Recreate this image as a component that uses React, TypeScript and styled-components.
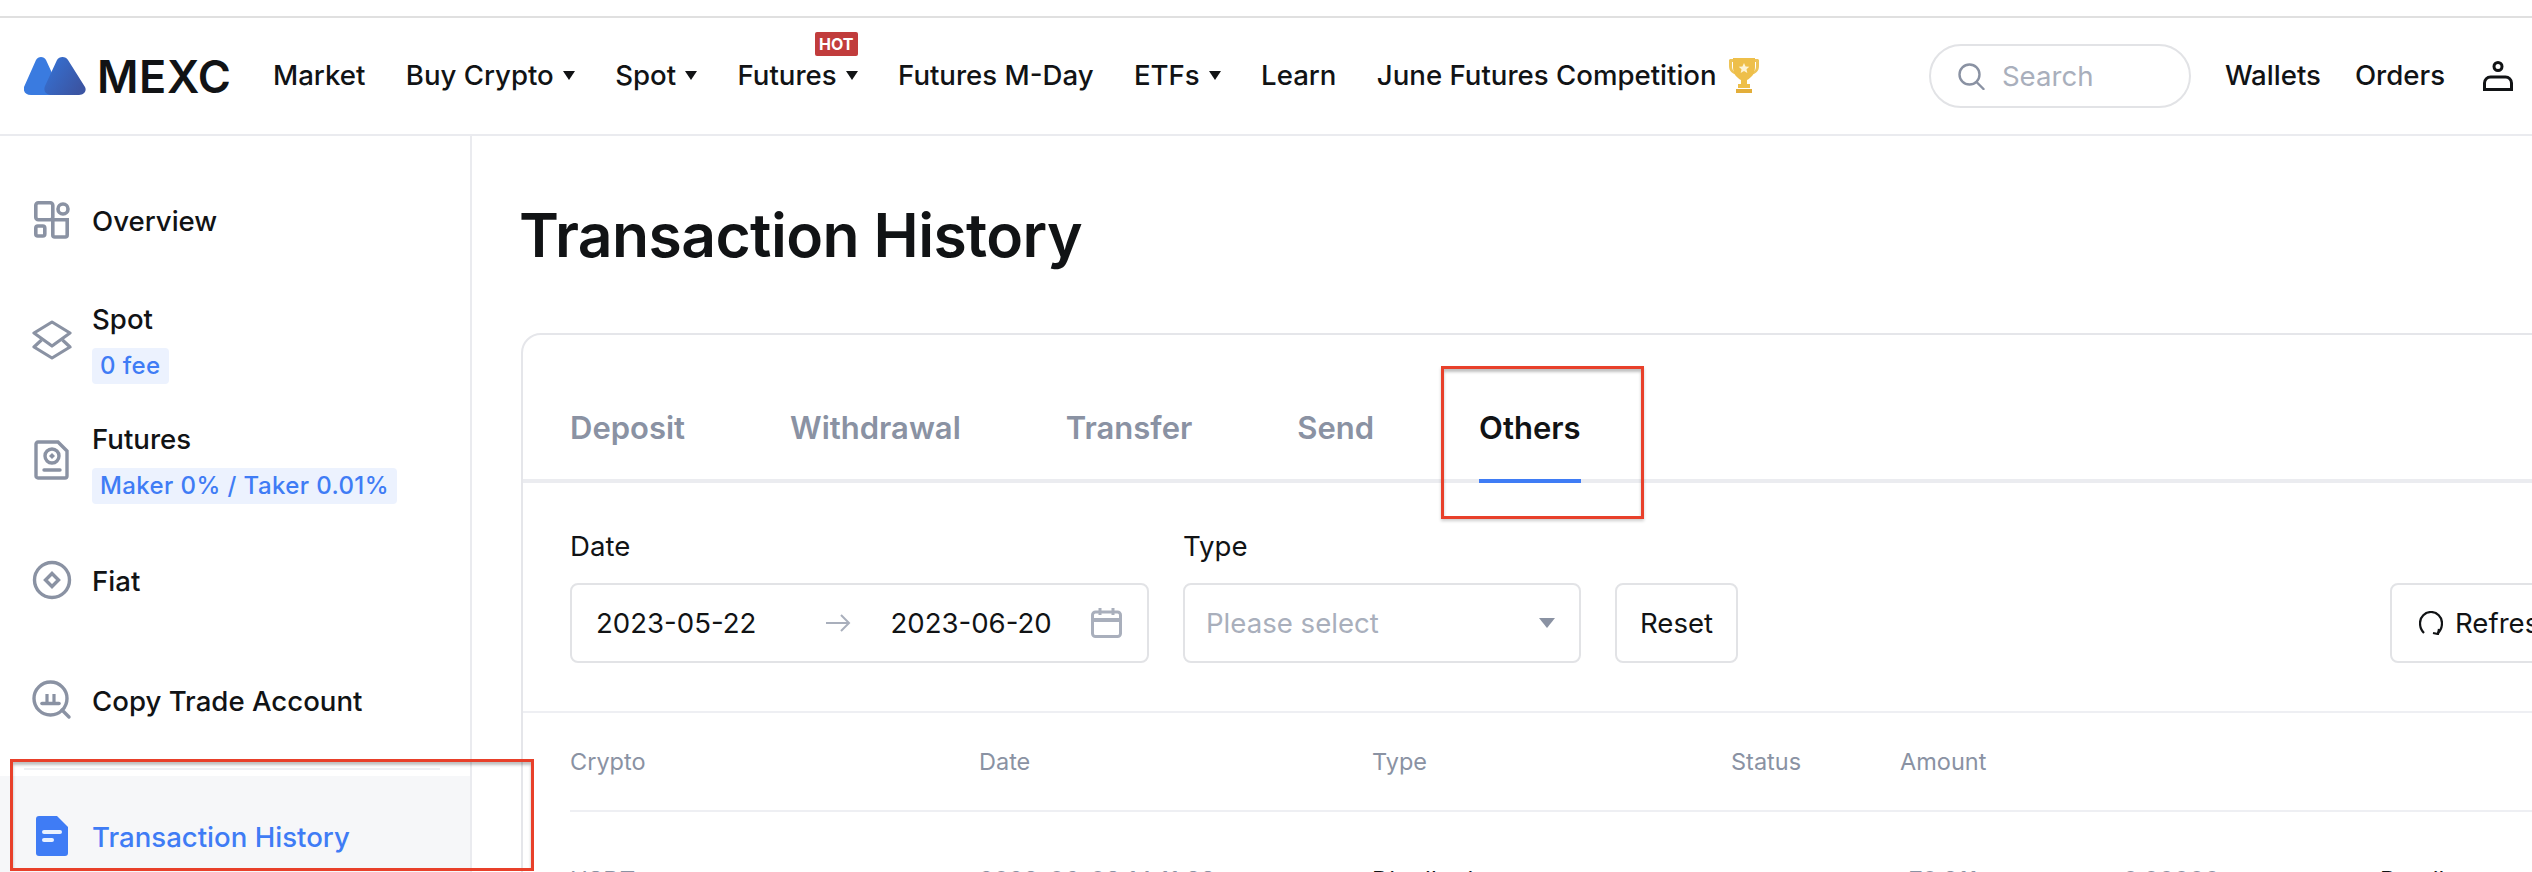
import React from 'react';
import styled, { createGlobalStyle } from 'styled-components';

const GlobalStyle = createGlobalStyle`
  html, body {
    margin: 0;
    height: 872px;
    overflow: hidden;
    background: #fff;
    color: #111315;
    font-family: Inter, "Liberation Sans", sans-serif;
    font-size: 27.6px;
  }
  * { box-sizing: border-box; }
`;

const Page = styled.div`
  position: relative;
  width: 2532px;
  height: 872px;
  overflow: hidden;
  padding-top: 16px;
`;

const Header = styled.header`
  display: flex;
  align-items: center;
  height: 120px;
  padding: 0 19px 0 24px;
  border-top: 2px solid #e0e0e0;
  border-bottom: 2px solid #eaebef;
`;

const Logo = styled.div`
  display: flex;
  align-items: center;
  gap: 11px;
  width: 249px;
`;

const LogoText = styled.span`
  font-size: 45px;
  font-weight: 600;
  letter-spacing: 0.6px;
  line-height: 1;
`;

const Nav = styled.nav`
  display: flex;
  align-items: center;
  gap: 40.4px;
  padding-bottom: 2px;
  font-weight: 500;
`;

const NavItem = styled.a`
  position: relative;
  display: flex;
  align-items: center;
  white-space: nowrap;
`;

const Caret = styled.i`
  width: 0;
  height: 0;
  margin-left: 9px;
  border-left: 6.5px solid transparent;
  border-right: 6.5px solid transparent;
  border-top: 9px solid #111315;
`;

const HotBadge = styled.span`
  position: absolute;
  top: -26px;
  right: 0;
  width: 43px;
  height: 24px;
  background: #c13c3c;
  border-radius: 2px;
  color: #fff;
  font-size: 16px;
  font-weight: 700;
  line-height: 24px;
  text-align: center;
`;

const TrophyIcon = styled.svg`
  width: 36px;
  height: 36px;
  margin-left: 9px;
`;

const HeaderRight = styled.div`
  display: flex;
  align-items: center;
  margin-left: auto;
  font-weight: 500;
`;

const SearchBox = styled.div`
  display: flex;
  align-items: center;
  gap: 17px;
  width: 262px;
  height: 64px;
  padding-left: 27px;
  margin-right: 34px;
  border: 2px solid #e2e3e6;
  border-radius: 32px;
  color: #a9afbc;
  font-weight: 400;
`;

const HeaderLink = styled.a<{ $wide?: boolean }>`
  margin-right: ${(p) => (p.$wide ? '38px' : '34px')};
  padding-bottom: 2px;
`;

const Body = styled.div`
  display: flex;
  height: 736px;
`;

const Sidebar = styled.aside`
  flex: none;
  width: 472px;
  padding-top: 24px;
  border-right: 2px solid #eaebef;
  font-weight: 500;
`;

const MenuItem = styled.div<{ $active?: boolean }>`
  display: flex;
  align-items: center;
  gap: 20px;
  height: 120px;
  padding-left: 32px;
  background: ${(p) => (p.$active ? '#f6f7f9' : 'transparent')};
  color: ${(p) => (p.$active ? '#3f7cf5' : 'inherit')};
`;

const MenuIcon = styled.svg`
  flex: none;
  width: 40px;
  height: 40px;
`;

const MenuLabel = styled.div`
  padding-top: 1px;
  margin-bottom: -1px;
  line-height: 44px;
`;

const FeeTag = styled.div`
  width: fit-content;
  height: 36px;
  margin-top: 8px;
  padding: 0 8px;
  background: #ecf2fe;
  border-radius: 4px;
  color: #3f7cf5;
  font-size: 24px;
  font-weight: 500;
  letter-spacing: 0.4px;
  line-height: 36px;
`;

const MenuDivider = styled.div`
  height: 2px;
  margin: 8px 30px 6px 24px;
  background: #eeeff3;
`;

const Main = styled.main`
  flex: none;
  width: 2109px;
  margin-left: 49px;
`;

const Title = styled.h1`
  margin: 0 0 0 -2px;
  height: 197px;
  padding-top: 59px;
  font-size: 60.6px;
  font-weight: 600;
  line-height: 80px;
  letter-spacing: -0.6px;
`;

const Card = styled.section`
  position: relative;
  height: 600px;
  border: 2px solid #e5e6ea;
  border-radius: 20px 20px 0 0;
`;

const TabBar = styled.div`
  display: flex;
  gap: 105px;
  padding-left: 47px;
  border-bottom: 4px solid #ebecf0;
`;

const Tab = styled.div<{ $active?: boolean }>`
  height: 148px;
  margin-bottom: -4px;
  padding-top: 73px;
  border-bottom: 4px solid ${(p) => (p.$active ? '#3f7cf5' : 'transparent')};
  color: ${(p) => (p.$active ? '#111315' : '#8a92a3')};
  font-size: 31px;
  font-weight: 600;
  line-height: 40px;
`;

const Filters = styled.div`
  display: flex;
  align-items: flex-end;
  gap: 34px;
  padding: 41px 47px 48px;
  border-bottom: 2px solid #eeeff3;
`;

const Field = styled.label`
  display: block;
`;

const FieldLabel = styled.div`
  margin-bottom: 15px;
  font-weight: 400;
  line-height: 44px;
`;

const Control = styled.div`
  display: flex;
  align-items: center;
  height: 80px;
  border: 2px solid #e2e3e6;
  border-radius: 8px;
  background: #fff;
`;

const DateControl = styled(Control)`
  width: 579px;
  padding-left: 24px;
  gap: 39px;
`;

const ArrowIcon = styled.svg`
  width: 25px;
  height: 20px;
  margin-left: 31px;
`;

const CalendarIcon = styled.svg`
  width: 31px;
  height: 30px;
`;

const SelectControl = styled(Control)`
  justify-content: space-between;
  width: 398px;
  padding: 0 24px 0 21px;
  color: #a9afbc;
`;

const SelectCaret = styled.i`
  width: 0;
  height: 0;
  border-left: 8px solid transparent;
  border-right: 8px solid transparent;
  border-top: 10px solid #8a92a3;
`;

const Button = styled(Control)`
  justify-content: center;
  gap: 12px;
  width: 123px;
`;

const RefreshButton = styled(Button)`
  justify-content: flex-start;
  width: 191px;
  margin-left: auto;
  padding-left: 27px;
`;

const TableRow = styled.div`
  display: grid;
  grid-template-columns: 409px 393px 359px 169px 223px 257px 1fr;
  margin: 0 47px;
`;

const TableHead = styled(TableRow)`
  align-items: center;
  height: 99px;
  border-bottom: 2px solid #eeeff3;
  color: #8a92a3;
  font-size: 23.5px;
`;

const TableBody = styled(TableRow)`
  grid-template-columns: 409px 393px 359px 178px 214px 257px 1fr;
  padding-top: 53px;
  font-size: 24px;
  line-height: 32px;
`;

const MutedCell = styled.div`
  color: #8a92a3;
`;

const SidebarMark = styled.div`
  position: absolute;
  left: 10px;
  top: 759px;
  width: 524px;
  height: 112px;
  border: 3px solid #e8402a;
  box-shadow: inset 0 3px 3px rgba(0, 0, 0, 0.25);
`;

const TabMark = styled.div`
  position: absolute;
  left: 1441px;
  top: 366px;
  width: 203px;
  height: 153px;
  border: 3px solid #e8402a;
  box-shadow: inset 0 3px 3px rgba(0, 0, 0, 0.25), 0 2px 3px rgba(0, 0, 0, 0.2);
`;

const MexcLogo = () => (
  <svg width="62" height="38" viewBox="0 0 62 38">
    <defs>
      <linearGradient id="peak" x1="0" y1="0" x2="1" y2="0.6">
        <stop offset="0" stopColor="#3574d8" />
        <stop offset="1" stopColor="#3b55a3" />
      </linearGradient>
    </defs>
    <path d="M12 3c2-4 8-4 10 0l12 26c3 5 0 9-5 9H7c-5 0-8-3-7-8z" fill="#3a7be0" />
    <path d="M33 3c2-4 9-4 11 0l17 27c2 4-1 8-6 8H28c-6 0-9-4-7-9z" fill="url(#peak)" />
  </svg>
);

const Trophy = () => (
  <TrophyIcon viewBox="0 0 36 36">
    <path d="M4 2h4v3H6v4c0 4 2 6 5 7l1 2C6 17 3 14 3 9V3zM32 2h-4v3h2v4c0 4-2 6-5 7l-1 2c6-1 9-4 9-9V3z" fill="#eec458" />
    <path d="M7 1h22v9c0 7-4 11-8 13v4h3v4H12v-4h3v-4C11 21 7 17 7 10z" fill="#eebf4a" />
    <path d="M10 32h16v4H10z" fill="#e3ae3a" />
    <path d="m18 6 1.6 3.4 3.7.4-2.8 2.5.8 3.7-3.3-1.9-3.3 1.9.8-3.7-2.8-2.5 3.7-.4z" fill="#fdf3d4" />
  </TrophyIcon>
);

const SearchIcon = () => (
  <svg width="27" height="27" viewBox="0 0 27 27" fill="none" stroke="#8a92a3" strokeWidth="2.4" strokeLinecap="round">
    <circle cx="11.5" cy="11.5" r="10" />
    <path d="m18.5 19 7 7" />
  </svg>
);

const UserIcon = () => (
  <svg width="30" height="30" viewBox="0 0 30 30" fill="none" stroke="#111315" strokeWidth="3">
    <circle cx="15" cy="5.5" r="4" />
    <path d="M1.5 28.5V22a6 6 0 0 1 6-6h15a6 6 0 0 1 6 6v6.5z" />
  </svg>
);

const OverviewIcon = () => (
  <MenuIcon viewBox="0 0 40 40" fill="none" stroke="#8a92a3" strokeWidth="3.6">
    <rect x="3.8" y="2.8" width="17" height="17" rx="2.5" />
    <circle cx="31" cy="9" r="5" />
    <rect x="3.8" y="26" width="9" height="10" rx="2" />
    <path d="M20.8 19.8h14.4V35a2 2 0 0 1-2 2H22.8a2 2 0 0 1-2-2z" />
  </MenuIcon>
);

const LayersIcon = () => (
  <MenuIcon viewBox="0 0 40 40" fill="none" stroke="#8a92a3" strokeWidth="3.2" strokeLinejoin="round">
    <path d="M20 2 38 13 20 26 2 13z" />
    <path d="M9.5 20 2 27l18 11 18-11-7.5-7" />
  </MenuIcon>
);

const ContractIcon = () => (
  <MenuIcon viewBox="0 0 40 40" fill="none" stroke="#8a92a3" strokeWidth="3.4">
    <path d="M6 2h20l9 9v25a2 2 0 0 1-2 2H6a2 2 0 0 1-2-2V4a2 2 0 0 1 2-2z" />
    <circle cx="20" cy="16" r="7" />
    <path d="M12 30h16" strokeLinecap="round" />
    <path d="m20 13 3 3-3 3-3-3z" fill="#8a92a3" stroke="none" />
  </MenuIcon>
);

const FiatIcon = () => (
  <MenuIcon viewBox="0 0 40 40" fill="none" stroke="#8a92a3" strokeWidth="3.4">
    <circle cx="20" cy="20" r="17.5" />
    <path d="m20 13.5 6.5 6.5-6.5 6.5-6.5-6.5z" />
  </MenuIcon>
);

const CopyIcon = () => (
  <MenuIcon viewBox="0 0 40 40" fill="none" stroke="#8a92a3" strokeWidth="3.4">
    <circle cx="18.5" cy="18.5" r="16.5" />
    <path d="m30 30 7 7" strokeLinecap="round" />
    <path d="M10 23.5h17" strokeWidth="3.6" strokeLinecap="round" />
    <path d="M15 14v9M22 14v9" strokeWidth="3.2" />
  </MenuIcon>
);

const DocIcon = () => (
  <MenuIcon viewBox="0 0 40 40">
    <path d="M7 0h18l11 11v26a3 3 0 0 1-3 3H7a3 3 0 0 1-3-3V3a3 3 0 0 1 3-3z" fill="#3f7cf5" />
    <rect x="10" y="14" width="20" height="4" rx="2" fill="#eaf1fe" />
    <rect x="10" y="22" width="12" height="4" rx="2" fill="#eaf1fe" />
  </MenuIcon>
);

const RangeArrow = () => (
  <ArrowIcon viewBox="0 0 25 20" fill="none" stroke="#a9afbc" strokeWidth="2">
    <path d="M0 10h23M15 2l8 8-8 8" />
  </ArrowIcon>
);

const Calendar = () => (
  <CalendarIcon viewBox="0 0 31 30" fill="none" stroke="#a9afbc" strokeWidth="3">
    <rect x="1.5" y="4" width="28" height="24.5" rx="3" />
    <path d="M1.5 12h28" strokeWidth="4" />
    <path d="M9 0v7M22 0v7" />
  </CalendarIcon>
);

const RefreshIcon = () => (
  <svg width="24" height="24" viewBox="0 0 24 24" fill="none" stroke="#111315" strokeWidth="2.2">
    <path d="M5 22C2 19 1 16 1 12 1 6 6 1 12 1s11 5 11 11c0 4-1 7-4 10" />
    <path d="m14 22 5 1 1-5" />
  </svg>
);

const menu = [
  { label: 'Overview', icon: <OverviewIcon /> },
  { label: 'Spot', tag: '0 fee', icon: <LayersIcon /> },
  { label: 'Futures', tag: 'Maker 0% / Taker 0.01%', icon: <ContractIcon /> },
  { label: 'Fiat', icon: <FiatIcon /> },
  { label: 'Copy Trade Account', icon: <CopyIcon /> },
];

const tabs = ['Deposit', 'Withdrawal', 'Transfer', 'Send', 'Others'];

export default function App(): React.JSX.Element {
  return (
    <Page>
      <GlobalStyle />
      <Header>
        <Logo>
          <MexcLogo />
          <LogoText>MEXC</LogoText>
        </Logo>
        <Nav>
          <NavItem>Market</NavItem>
          <NavItem>Buy Crypto<Caret /></NavItem>
          <NavItem>Spot<Caret /></NavItem>
          <NavItem>Futures<Caret /><HotBadge>HOT</HotBadge></NavItem>
          <NavItem>Futures M-Day</NavItem>
          <NavItem>ETFs<Caret /></NavItem>
          <NavItem>Learn</NavItem>
          <NavItem>June Futures Competition<Trophy /></NavItem>
        </Nav>
        <HeaderRight>
          <SearchBox><SearchIcon />Search</SearchBox>
          <HeaderLink>Wallets</HeaderLink>
          <HeaderLink $wide>Orders</HeaderLink>
          <UserIcon />
        </HeaderRight>
      </Header>
      <Body>
        <Sidebar>
          {menu.map((item) => (
            <MenuItem key={item.label}>
              {item.icon}
              <div>
                <MenuLabel>{item.label}</MenuLabel>
                {item.tag && <FeeTag>{item.tag}</FeeTag>}
              </div>
            </MenuItem>
          ))}
          <MenuDivider />
          <MenuItem $active>
            <DocIcon />
            <MenuLabel>Transaction History</MenuLabel>
          </MenuItem>
        </Sidebar>
        <Main>
          <Title>Transaction History</Title>
          <Card>
            <TabBar>
              {tabs.map((tab) => (
                <Tab key={tab} $active={tab === 'Others'}>{tab}</Tab>
              ))}
            </TabBar>
            <Filters>
              <Field>
                <FieldLabel>Date</FieldLabel>
                <DateControl>
                  <span>2023-05-22</span>
                  <RangeArrow />
                  <span>2023-06-20</span>
                  <Calendar />
                </DateControl>
              </Field>
              <Field>
                <FieldLabel>Type</FieldLabel>
                <SelectControl>Please select<SelectCaret /></SelectControl>
              </Field>
              <Button>Reset</Button>
              <RefreshButton><RefreshIcon />Refresh</RefreshButton>
            </Filters>
            <TableHead>
              <div>Crypto</div>
              <div>Date</div>
              <div>Type</div>
              <div>Status</div>
              <div>Amount</div>
            </TableHead>
            <TableBody>
              <MutedCell>USDT</MutedCell>
              <MutedCell>2023-06-08 14:11:38</MutedCell>
              <div>Distribution</div>
              <MutedCell>+</MutedCell>
              <MutedCell>70.311</MutedCell>
              <MutedCell>0.00000</MutedCell>
              <div>Details</div>
            </TableBody>
          </Card>
        </Main>
      </Body>
      <SidebarMark />
      <TabMark />
    </Page>
  );
}
